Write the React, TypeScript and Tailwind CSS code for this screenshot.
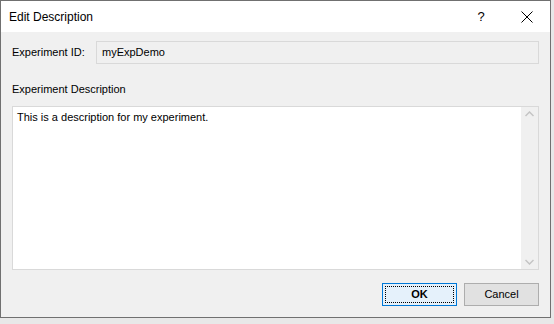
import { useState } from "react"

export default function App() {
  const [desc, setDesc] = useState("This is a description for my experiment.")
  return (
    <div className="w-[554px] h-[324px] bg-[#e8e8e8]" style={{ fontFamily: '"Liberation Sans", Arial, sans-serif' }}>
      <div className="w-[551px] h-[318px] border border-[#707070] bg-[#f0f0f0] flex flex-col text-[11px] text-black">
        {/* title bar */}
        <div className="h-[31px] bg-white flex items-center pl-[8px]">
          <span className="flex-1 text-[12px]">Edit Description</span>
          <span className="w-[46px] text-center text-[13px]">?</span>
          <span className="w-[46px] flex justify-center">
            <svg width="12" height="12" viewBox="0 0 12 12" stroke="#000" strokeWidth="1">
              <path d="M0.5 0.5 L11.5 11.5 M11.5 0.5 L0.5 11.5" />
            </svg>
          </span>
        </div>

        <div className="flex-1 flex flex-col px-[11px] pt-[9px]">
          <div className="flex items-center h-[23px]">
            <span className="w-[84px] whitespace-nowrap">Experiment ID:</span>
            <div className="flex-1 h-[23px] border border-[#d9d9d9] bg-[#f0f0f0] flex items-center px-[5px]">myExpDemo</div>
          </div>

          <div className="mt-[17px] h-[16px] flex items-center">Experiment Description</div>

          <div className="mt-[9px] h-[164px] border border-[#d9d9d9] bg-white flex">
            <textarea
              value={desc}
              onChange={(e) => setDesc(e.target.value)}
              className="flex-1 resize-none outline-none px-[4px] pt-[2px] leading-[16px] bg-white"
            />
            <div className="w-[17px] bg-[#f0f0f0] flex flex-col justify-between items-center py-[4px]">
              <svg width="9" height="6" viewBox="0 0 9 6" fill="none" stroke="#c4c4c4" strokeWidth="1.5">
                <path d="M0.5 5 L4.5 1 L8.5 5" />
              </svg>
              <svg width="9" height="6" viewBox="0 0 9 6" fill="none" stroke="#c4c4c4" strokeWidth="1.5">
                <path d="M0.5 1 L4.5 5 L8.5 1" />
              </svg>
            </div>
          </div>

          <div className="mt-[13px] flex justify-end gap-[7px]">
            <button className="w-[75px] h-[23px] border border-[#0078d7] bg-[#e5f1fb] p-[2px]">
              <div className="w-full h-full border border-dotted border-black flex items-center justify-center font-bold">OK</div>
            </button>
            <button className="w-[75px] h-[23px] border border-[#adadad] bg-[#e1e1e1] flex items-center justify-center">Cancel</button>
          </div>
        </div>
      </div>
    </div>
  )
}
